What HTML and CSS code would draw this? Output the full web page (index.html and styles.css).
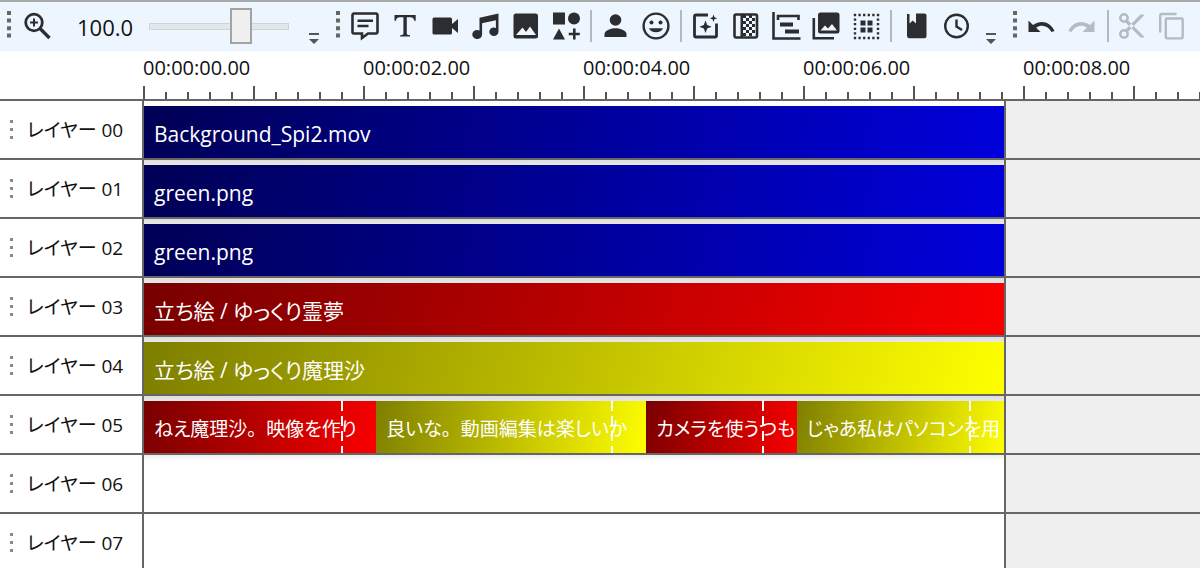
FILE: index.html
```html
<!DOCTYPE html>
<html lang="ja">
<head>
<meta charset="utf-8">
<title>タイムライン</title>
<link rel="stylesheet" href="styles.css">
</head>
<body>
<svg class="defs" width="0" height="0" aria-hidden="true">
  <symbol id="grip" viewBox="0 0 4 27"><path d="M0 0h4v4H0zM0 7.6h4v4H0zM0 15.2h4v4H0zM0 22.6h4v4H0z"/></symbol>
  <symbol id="more" viewBox="0 0 10 11"><path d="M0 0h10v2H0zM0 6h10l-5 5z"/></symbol>
</svg>
<header class="toolbar">
  <div class="group group-zoom">
    <svg class="grip"><use href="#grip"/></svg>
    <button class="tool" aria-label="拡大"><svg viewBox="0 0 30 30"><g fill="none" stroke="currentColor"><circle cx="12" cy="11.500" r="8.300" stroke-width="2.800"/><path d="M18 17.500l9.500 9.500" stroke-width="3.400"/><path d="M12 7.500v8M8 11.500h8" stroke-width="2"/></g></svg></button>
    <label class="zoom-value" for="zoom">100.0</label>
    <input class="zoom-slider" id="zoom" type="range" min="0" max="100" value="69">
    <button class="more" aria-label="その他"><svg><use href="#more"/></svg></button>
  </div>
  <div class="group">
    <svg class="grip"><use href="#grip"/></svg>
    <button class="tool" aria-label="ボイス"><svg viewBox="0 0 30 30"><path d="M3 2.500h22a1.500 1.500 0 0 1 1.500 1.500v17a1.500 1.500 0 0 1-1.500 1.500H17L11 27v-4.500H3A1.500 1.500 0 0 1 1.500 21V4A1.500 1.500 0 0 1 3 2.500z" fill="none" stroke="currentColor" stroke-width="2.600"/><path d="M6.500 9.800h15.500M6.500 15h11" stroke="currentColor" stroke-width="2.400"/></svg></button>
    <button class="tool" aria-label="テキスト"><svg viewBox="0 0 30 30"><path d="M3.500 4h21.200v5.800h-1.400c-.6-2.600-1.500-3.600-4-3.600h-3.500v16c0 1.400.8 1.900 3.200 2V25.500H9.200v-1.300c2.400-.1 3.200-.6 3.200-2v-16H8.900c-2.500 0-3.400 1-4 3.600H3.500z"/></svg></button>
    <button class="tool" aria-label="動画"><svg viewBox="0 0 30 30"><path d="M3 6.500h16.500a1.500 1.500 0 0 1 1.500 1.500v5l6-5v14l-6-5v5a1.500 1.500 0 0 1-1.500 1.500H3A1.500 1.500 0 0 1 1.500 22V8A1.500 1.500 0 0 1 3 6.500z"/></svg></button>
    <button class="tool" aria-label="音声"><svg viewBox="0 0 30 30"><path d="M8.500 6.800L27.500 2.500v18.300a4.600 4.300 0 1 1-2.600-3.900V9.200L11.100 12.300v11.200a4.900 4.500 0 1 1-2.600-4z"/></svg></button>
    <button class="tool" aria-label="画像"><svg viewBox="0 0 30 30"><path fill-rule="evenodd" d="M5 2.500h19.500a2.500 2.500 0 0 1 2.500 2.500v20a2.500 2.500 0 0 1-2.500 2.500H5A2.500 2.500 0 0 1 2.500 25V5A2.500 2.500 0 0 1 5 2.500zM5 24h20l-6-8.500-4 5.500-3.500-4.500z"/></svg></button>
    <button class="tool" aria-label="図形"><svg viewBox="0 0 30 30"><path d="M2 1.500h12v12H2zM8 17.500l6 11H2zM22 17.500h2.600v4.200h4.200v2.600h-4.200v4.200H22v-4.200h-4.200v-2.600H22z"/><circle cx="23" cy="7.500" r="6"/></svg></button>
    <span class="sep"></span>
    <button class="tool" aria-label="立ち絵"><svg viewBox="0 0 30 30"><circle cx="14.500" cy="9" r="5.800"/><path d="M3.500 26v-3c0-3.800 7.300-5.800 11-5.800s11 2 11 5.800v3z"/></svg></button>
    <button class="tool" aria-label="表情"><svg viewBox="0 0 30 30"><circle cx="15" cy="15" r="12.400" fill="none" stroke="currentColor" stroke-width="2.400"/><circle cx="10.500" cy="11.500" r="2"/><circle cx="19.500" cy="11.500" r="2"/><path d="M8 17.300h14a7.400 6 0 0 1-14 0z"/></svg></button>
    <span class="sep"></span>
    <button class="tool" aria-label="エフェクト"><svg viewBox="0 0 30 30"><path d="M17 4H5a1.500 1.500 0 0 0-1.500 1.500v19A1.500 1.500 0 0 0 5 26h19a1.500 1.500 0 0 0 1.500-1.500V12.500" fill="none" stroke="currentColor" stroke-width="2.800"/><path d="M14.500 9.500l1.700 4.500 4.500 1.700-4.500 1.700-1.700 4.500-1.700-4.500-4.500-1.700 4.500-1.700zM22.500 3.500l1 2.700 2.700 1-2.700 1-1 2.700-1-2.700-2.700-1 2.700-1z"/></svg></button>
    <button class="tool" aria-label="場面切り替え"><svg viewBox="0 0 30 30"><path d="M5 3.500h19.500A1.500 1.500 0 0 1 26 5v20a1.500 1.500 0 0 1-1.500 1.500H5A1.500 1.500 0 0 1 3.500 25V5A1.500 1.500 0 0 1 5 3.500z" fill="none" stroke="currentColor" stroke-width="2.600"/><path d="M12 4h3v3h-3zM15 7h3v3h-3zM18 4h3v3h-3zM21 7h3v3h-3zM12 10h3v3h-3zM18 10h3v3h-3zM15 13h3v3h-3zM21 13h3v3h-3zM12 16h3v3h-3zM18 16h3v3h-3zM15 19h3v3h-3zM21 19h3v3h-3zM12 22h3v3h-3zM18 22h3v3h-3zM9.500 4H12v22H9.500z"/></svg></button>
    <button class="tool" aria-label="グループ制御"><svg viewBox="0 0 30 30"><path d="M2.500 1v26.500h27M7 9V5h20.500v4" fill="none" stroke="currentColor" stroke-width="2.600"/><path d="M9 11.500h13v4H9zM14 18.500h14v4H14z"/></svg></button>
    <button class="tool" aria-label="画面の複製"><svg viewBox="0 0 30 30"><path fill-rule="evenodd" d="M9.500 1.500H26A2.500 2.500 0 0 1 28.500 4v16a2.500 2.500 0 0 1-2.500 2.500H9.500A2.500 2.500 0 0 1 7 20V4a2.500 2.500 0 0 1 2.500-2.500zM9.500 19.500H26l-5-6.500-4 4.500-3-3z"/><path d="M2.800 7v20.200H23" fill="none" stroke="currentColor" stroke-width="2.600"/></svg></button>
    <button class="tool" aria-label="フレームバッファ"><svg viewBox="0 0 30 30"><rect x="4" y="4" width="23" height="23" fill="none" stroke="currentColor" stroke-width="2.400" stroke-dasharray="2.300 2.300" stroke-dashoffset="1.150"/><path d="M9.500 9.500h5v5h-5zM16.500 9.500h5v5h-5zM9.500 16.500h5v5h-5zM16.500 16.500h5v5h-5z"/></svg></button>
    <span class="sep"></span>
    <button class="tool" aria-label="テンプレート"><svg viewBox="0 0 30 30"><path d="M6 3h2.500v9.500l3.200-3 3.300 3V2.500h8.500A2 2 0 0 1 25.500 4.500v20.800a2 2 0 0 1-2 2h-15A2.500 2.500 0 0 1 6 25z"/></svg></button>
    <button class="tool" aria-label="履歴"><svg viewBox="0 0 30 30"><circle cx="15.500" cy="15" r="11.300" fill="none" stroke="currentColor" stroke-width="2.400"/><path d="M15.500 8.500v7l5.500 3.500" fill="none" stroke="currentColor" stroke-width="2.400"/></svg></button>
    <button class="more" aria-label="その他"><svg><use href="#more"/></svg></button>
  </div>
  <div class="group">
    <svg class="grip"><use href="#grip"/></svg>
    <button class="tool" aria-label="元に戻す"><svg viewBox="0 0 30 30"><path d="M.5 9.500V21H12.500l-4.300-4.200c5-3.500 11.500-2.400 15.300 4.300l3-1.200C22 10.500 13 8.500 5 14z"/></svg></button>
    <button class="tool" aria-label="やり直し" disabled><svg viewBox="0 0 30 30"><path d="M26.500 9.500V21H14.500l4.300-4.200c-5-3.500-11.500-2.400-15.300 4.300l-3-1.200C5 10.500 14 8.500 22 14z"/></svg></button>
    <span class="sep"></span>
    <button class="tool" aria-label="切り取り" disabled><svg viewBox="0 0 30 30"><g fill="none" stroke="currentColor" stroke-width="2.500"><circle cx="6" cy="7" r="3.700"/><circle cx="6" cy="23" r="3.700"/></g><path d="M8.500 7.700l17.500 17.800v1h-3.500L7.300 11.200zM8.500 22.300L26 4.500v-1h-3.500L7.300 18.800z"/></svg></button>
    <button class="tool" aria-label="コピー" disabled><svg viewBox="0 0 30 30"><path d="M2.200 21.500V4.500A1.500 1.500 0 0 1 3.700 3H18.500M9 7.500h14.500a1.200 1.200 0 0 1 1.200 1.200v17.500a1.200 1.200 0 0 1-1.200 1.200H9a1.200 1.200 0 0 1-1.200-1.200V8.700A1.200 1.200 0 0 1 9 7.500z" fill="none" stroke="currentColor" stroke-width="2.400"/></svg></button>
  </div>
</header>
<main class="timeline">
  <div class="ruler">
    <div class="scale">
      <time>00:00:00.00</time><time>00:00:02.00</time><time>00:00:04.00</time><time>00:00:06.00</time><time>00:00:08.00</time>
    </div>
  </div>
  <div class="layer"><div class="name"><i class="handle"></i>レイヤー 00</div><div class="track"><div class="clip video">Background_Spi2.mov</div></div></div>
  <div class="layer"><div class="name"><i class="handle"></i>レイヤー 01</div><div class="track"><div class="clip video">green.png</div></div></div>
  <div class="layer"><div class="name"><i class="handle"></i>レイヤー 02</div><div class="track"><div class="clip video">green.png</div></div></div>
  <div class="layer"><div class="name"><i class="handle"></i>レイヤー 03</div><div class="track"><div class="clip red">立ち絵 / ゆっくり霊夢</div></div></div>
  <div class="layer"><div class="name"><i class="handle"></i>レイヤー 04</div><div class="track"><div class="clip yellow">立ち絵 / ゆっくり魔理沙</div></div></div>
  <div class="layer"><div class="name"><i class="handle"></i>レイヤー 05</div><div class="track">
    <div class="clip voice red" style="width:27%">ねえ魔理沙<span class="stop">。</span>映像を作り</div>
    <div class="clip voice yellow" style="width:31.4%">良いな<span class="stop">。</span>動画編集は楽しいか</div>
    <div class="clip voice red" style="width:17.5%">カメラを使うつも</div>
    <div class="clip voice yellow" style="width:24.1%">じゃあ私はパソコンを用</div>
  </div></div>
  <div class="layer"><div class="name"><i class="handle"></i>レイヤー 06</div><div class="track"></div></div>
  <div class="layer"><div class="name"><i class="handle"></i>レイヤー 07</div><div class="track"></div></div>
</main>
</body>
</html>
```
FILE: styles.css
```css
* { box-sizing: border-box; }
html { height: 100%; }
body {
  margin: 0;
  height: 100%;
  overflow: hidden;
  display: flex;
  flex-direction: column;
  background: #fff;
  color: #111;
  font-family: "Open Sans", "Noto Sans CJK JP", sans-serif;
  font-size: 20px;
  line-height: 28px;
}
.defs { position: absolute; }

.toolbar {
  flex: none;
  display: flex;
  padding: 4px 0 5px;
  border-top: 2px solid #a9a9a9;
  background: #edf5fe;
}
.group { display: flex; align-items: center; flex: none; }
.group-zoom { width: 329px; }
.grip { width: 4px; height: 27px; margin: 0 6px 4px 7px; fill: #666; }
.tool {
  width: 40px;
  height: 40px;
  padding: 5px;
  border: 0;
  background: none;
  color: #2b2d30;
}
.tool svg { display: block; width: 30px; height: 30px; fill: currentColor; }
.tool:disabled { color: #b5bbc3; }
.sep { width: 2px; height: 32px; margin: 0 4px; background: #b4b9c0; }
.more {
  align-self: flex-end;
  width: 10px;
  height: 11px;
  margin: 0 10px 2px;
  padding: 0;
  border: 0;
  background: none;
}
.more svg { display: block; width: 10px; height: 11px; fill: #555; }
.zoom-value { margin: 2px 16px 0 20px; font-size: 22px; }
.zoom-slider {
  appearance: none;
  flex: 1;
  min-width: 0;
  height: 36px;
  margin: 0 10px 0 0;
  background: none;
}
.zoom-slider::-webkit-slider-runnable-track {
  height: 7px;
  border: 1px solid #cfd4d6;
  background: #e2e7ea;
}
.zoom-slider::-webkit-slider-thumb {
  appearance: none;
  width: 22px;
  height: 36px;
  margin-top: -16px;
  border: 2px solid #a3a3a3;
  background: #f0f0f0;
}

.timeline { flex: 1; min-height: 0; overflow: hidden; }
.ruler {
  height: 50px;
  padding-left: 143px;
  border-bottom: 2px solid #666;
  overflow: hidden;
}
.scale {
  display: grid;
  grid-auto-flow: column;
  grid-auto-columns: 220px;
  height: 48px;
  padding-top: 3px;
  background:
    repeating-linear-gradient(90deg, #555 0 2px, transparent 2px 110px) 0 100% / 100% 13px no-repeat,
    repeating-linear-gradient(90deg, #555 0 2px, transparent 2px 22px) 0 100% / 100% 7px no-repeat;
}

.layer { display: flex; height: 59px; background: #efefef; border-bottom: 2px solid #666; }
.name {
  flex: none;
  display: flex;
  align-items: center;
  gap: 14px;
  width: 144px;
  padding-left: 10px;
  border-right: 2px solid #666;
  background: #fff;
  font-size: 19px;
  white-space: pre;
  font-feature-settings: "palt";
}
.handle {
  width: 3px;
  height: 19px;
  background: repeating-linear-gradient(#8a8a8a 0 3px, transparent 3px 8px);
}
.track {
  flex: none;
  display: flex;
  width: 862px;
  padding-top: 5px;
  border-right: 2px solid #666;
  background: #fff;
}
.layer:has(.clip) + .layer .track { background: linear-gradient(#dedede, #e8e8e8 5px, #fff 10px); }
.layer:has(.clip) + .layer .track:empty { background: linear-gradient(#eee, #fff 6px); }
.clip {
  width: 100%;
  min-width: 0;
  padding: 14px 2px 10px 10px;
  color: #fff;
  font-size: 21px;
  white-space: nowrap;
  font-feature-settings: "palt";
}
.video { background: linear-gradient(105deg, #000055, #0000dc); }
.red { background: linear-gradient(105deg, #780000, #fa0000); }
.yellow { background: linear-gradient(105deg, #7e7e00, #ffff00); }
.voice { position: relative; font-size: 19px; }
.stop { font-feature-settings: normal; }
.voice::after {
  content: "";
  position: absolute;
  top: 0;
  bottom: 0;
  right: 33px;
  width: 2px;
  background: repeating-linear-gradient(#fff 0 10px, transparent 10px 15px);
}
```
